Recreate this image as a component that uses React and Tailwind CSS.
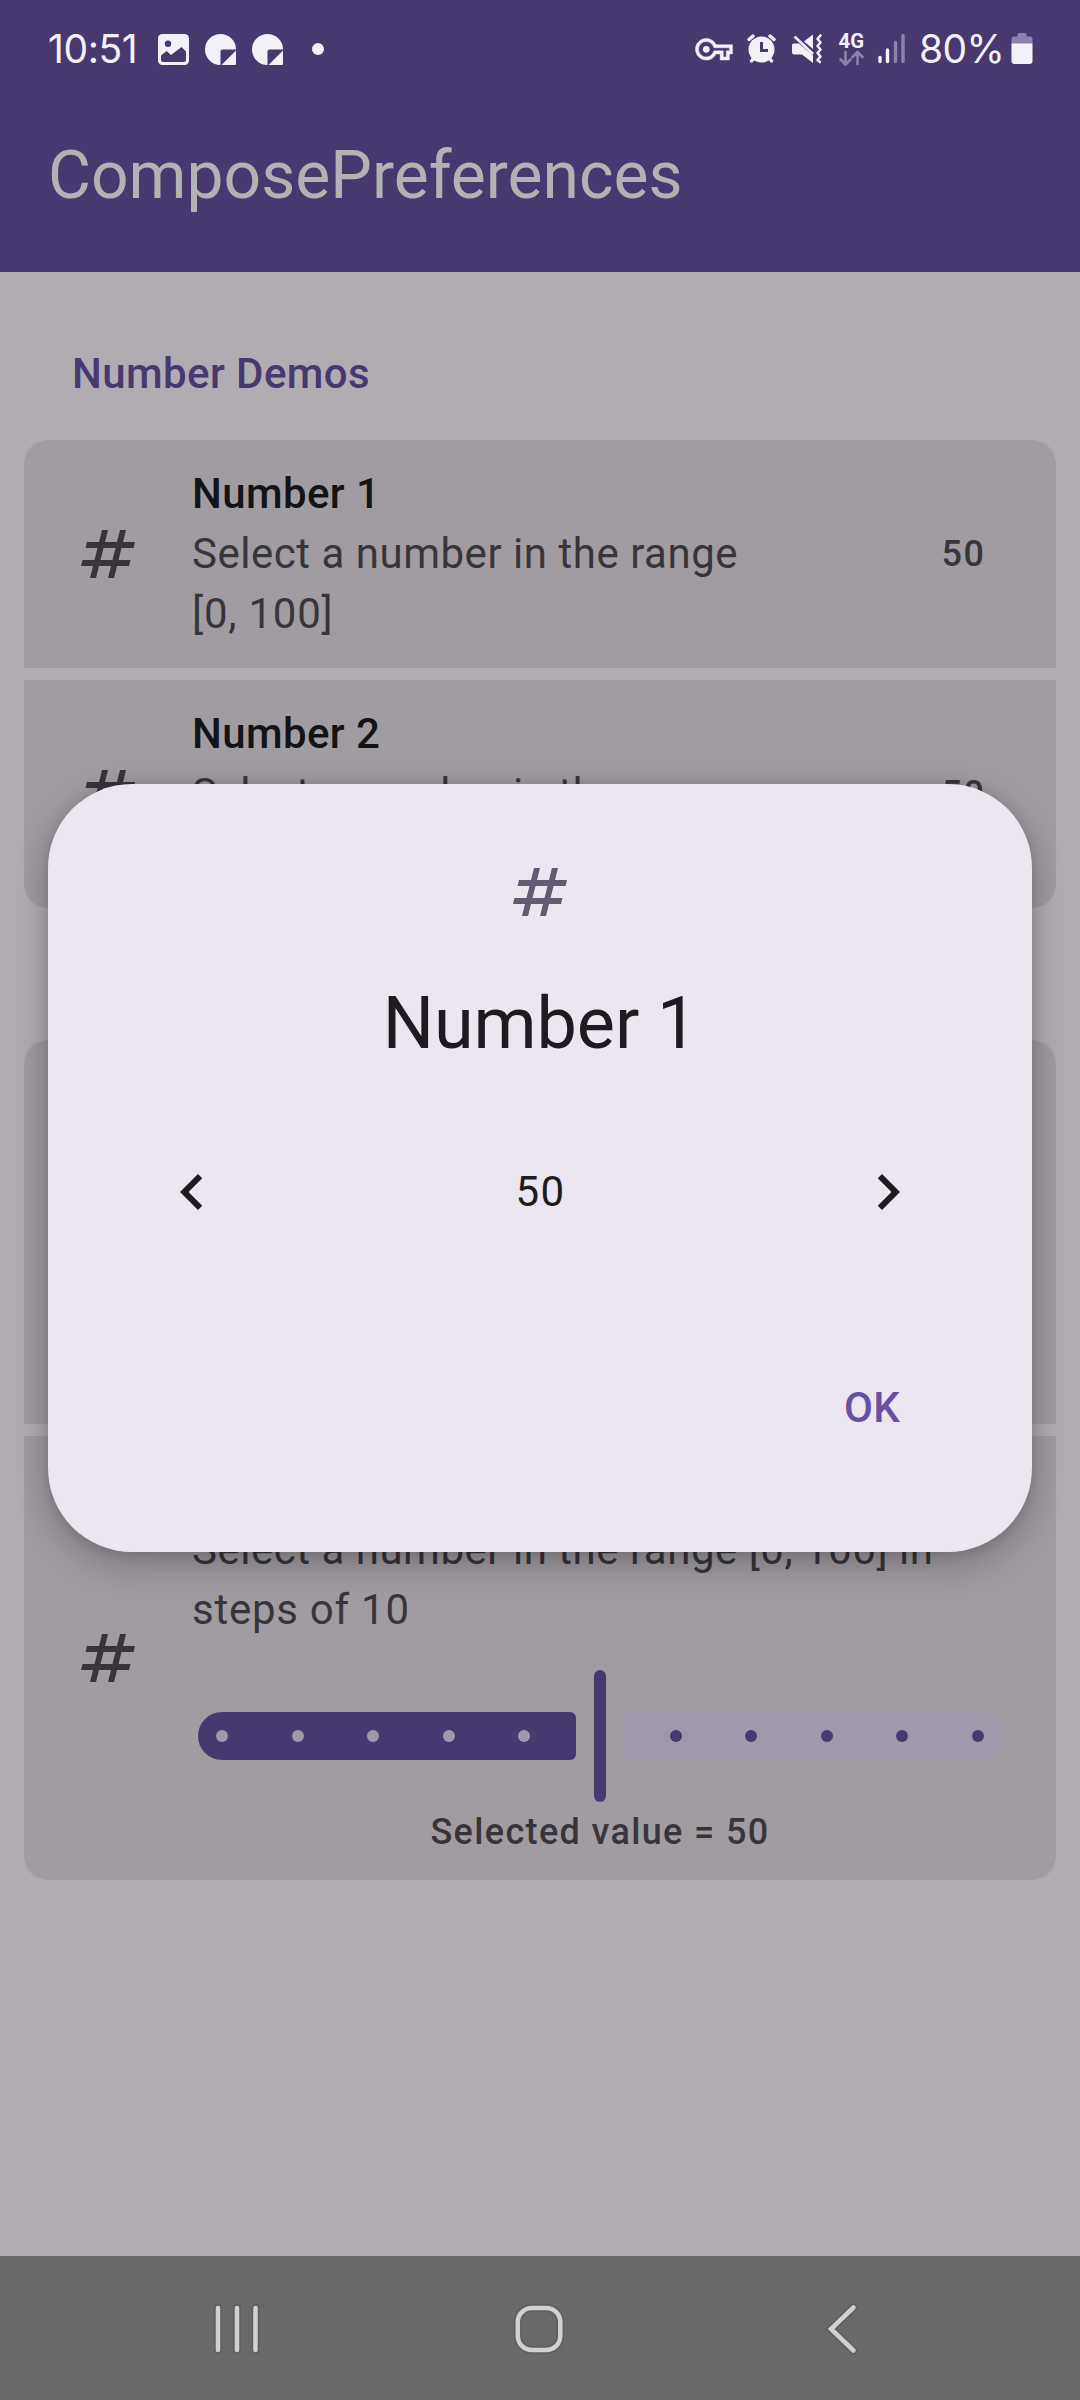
import React from "react";

function NumbersIcon({ className }) {
  return (
    <svg viewBox="0 0 24 24" fill="currentColor" className={"h-[72px] w-[72px] shrink-0 " + className}>
      <path d="M20.5 10L21 8h-4l1-4h-2l-1 4h-4l1-4h-2L9 8H5l-.5 2h4l-1 4h-4L3 16h4l-1 4h2l1-4h4l-1 4h2l1-4h4l.5-2h-4l1-4h4zm-7 4h-4l1-4h4l-1 4z" />
    </svg>
  );
}

function MessageIcon() {
  return (
    <svg viewBox="0 0 31 31" className="h-[31px] w-[31px]" fill="#f3f1f8">
      <path d="M15.5 0A15.5 15.5 0 1 0 15.5 31V17.5Q15.5 15.5 17.5 15.5H31A15.5 15.5 0 0 0 15.5 0Z" />
      <path d="M31 16.5V30a1 1 0 0 1-1 1H16.5z" />
    </svg>
  );
}

function StatusBar() {
  return (
    <div className="flex h-[98px] items-center text-[#f3f1f8]">
      <span className="ml-[48px] w-[110px] whitespace-nowrap font-['Inter'] text-[39px] leading-[48px] font-normal tracking-[-0.4px]">
        10:51
      </span>
      <svg viewBox="0 0 31 31" className="h-[31px] w-[31px]">
        <rect width="31" height="31" rx="4.5" fill="#f3f1f8" />
        <circle cx="10" cy="9.7" r="3.2" fill="#483870" />
        <path d="M3 25V21.5L8.5 17l4.5 4L23.500 13l4.500 4.500V26q0 2-2 2H5q-2 0-2-2z" fill="#483870" />
      </svg>
      <div className="ml-[16px] flex gap-[16px]">
        <MessageIcon />
        <MessageIcon />
      </div>
      <span className="ml-[29px] h-[12px] w-[12px] rounded-full bg-[#f3f1f8]" />
      <svg viewBox="690 24 245 50" className="ml-[366px] h-[50px] w-[245px]" fill="none">
        <g transform="translate(695.500 30.800) scale(1.540)" fill="#f3f1f8">
          <path d="M22 19h-6v-4h-2.680c-1.140 2.420-3.600 4-6.320 4-3.860 0-7-3.140-7-7s3.140-7 7-7c2.720 0 5.170 1.580 6.320 4H24v6h-2v4zm-4-2h2v-4h2v-2H11.940l-.23-.67C11.010 8.340 9.110 7 7 7c-2.760 0-5 2.240-5 5s2.240 5 5 5c2.110 0 4.010-1.340 4.710-3.330l.23-.67H18v4z" stroke="#f3f1f8" strokeWidth=".3" />
          <circle cx="7" cy="12" r="2.200" />
        </g>
        <path d="M749 39.500L753 36M774 39.500L770 36M751.500 61L754.500 57M771.500 61L768.500 57" stroke="#f3f1f8" strokeWidth="3.400" strokeLinecap="round" />
        <circle cx="761.500" cy="49.500" r="13" fill="#f3f1f8" />
        <path d="M761.500 42v8.500h6.500" stroke="#483870" strokeWidth="3" />
        <path d="M792 45q0-1.500 1.500-1.500H799L813 55.500V63L802 54.500H794q-2 0-2-2z" fill="#f3f1f8" />
        <path d="M804 41.500L813 34.500V49z" fill="#f3f1f8" />
        <path d="M794.500 36.500L813 54" stroke="#f3f1f8" strokeWidth="2.600" />
        <path d="M820.500 35.500l-3 3.500 3 3.500-3 3.500 3 3.500-3 3.500 3 3.500-3 3.500 2.500 2" stroke="#f3f1f8" strokeWidth="2.600" strokeLinejoin="round" strokeLinecap="round" />
        <text x="838.500" y="47.500" fill="#f3f1f8" fontFamily="Roboto" fontWeight="700" fontSize="19.500" textLength="25.500" lengthAdjust="spacingAndGlyphs">4G</text>
        <path d="M845.500 52v12M840.500 59.500l5 5 5-5M857.500 64V52.500M852.500 57l5-5 5 5" stroke="#8d80aa" strokeWidth="2.600" strokeLinecap="round" strokeLinejoin="round" />
        <path d="M880 57.500V61.500M887.500 50V61.500" stroke="#f3f1f8" strokeWidth="3.400" strokeLinecap="round" />
        <path d="M895.500 42.500V61.500M903 35.500V61.500" stroke="#8d80aa" strokeWidth="3.400" strokeLinecap="round" />
      </svg>
      <span className="ml-[-16px] w-[92px] whitespace-nowrap font-['Inter'] text-[39px] leading-[48px] font-normal tracking-[-0.6px]">
        80%
      </span>
      <svg viewBox="0 0 22 32" className="h-[32px] w-[22px]">
        <path d="M6.500 3V1.500Q6.500 0 8 0h6q1.500 0 1.500 1.500V3.500H19q2.500 0 2.500 3V11H.5V6.500q0-3 2.500-3h3.500z" fill="#8d80aa" />
        <path d="M.5 10.500h21V28q0 3-3 3H3.500q-3 0-3-3z" fill="#f3f1f8" />
      </svg>
    </div>
  );
}

function NumberRow({ title, value, className }) {
  return (
    <section className={"flex h-[228px] items-center bg-[#a19ca2] px-[48px] " + className}>
      <NumbersIcon className="text-[#38353a]" />
      <div className="ml-[48px] w-[600px]">
        <h2 className="text-[42px] leading-[60px] font-medium tracking-[0.4px] text-[#141316]">{title}</h2>
        <p className="text-[42px] leading-[60px] tracking-[0.75px] text-[#38353a]">
          <span className="tracking-[0.52px]">Select a number in the range</span> [0, 100]
        </p>
      </div>
      <span className="mr-[22.5px] ml-auto text-[36px] leading-[48px] font-medium tracking-[1.5px] text-[#38353a]">
        {value}
      </span>
    </section>
  );
}

function Dots({ className }) {
  return [0, 1, 2, 3, 4].map((i) => <span key={i} className={"h-[12px] w-[12px] rounded-full " + className} />);
}

function Slider() {
  return (
    <div className="mt-[24px] flex h-[144px] items-center gap-[18px] px-[6px]">
      <div className="flex h-[48px] w-[378px] items-center justify-between rounded-l-[24px] rounded-r-[6px] bg-[#483870] pr-[45.6px] pl-[18px]">
        <Dots className="bg-[#a199ab]" />
      </div>
      <div className="h-[132px] w-[12px] rounded-full bg-[#483870]" />
      <div className="flex h-[48px] w-[378px] items-center justify-between rounded-l-[6px] rounded-r-[24px] bg-[#a199ab] pr-[18px] pl-[45.6px]">
        <Dots className="bg-[#483870]" />
      </div>
    </div>
  );
}

function Dialog() {
  return (
    <div
      role="dialog"
      className="absolute top-[784px] left-[48px] flex h-[768px] w-[984px] flex-col items-center rounded-[84px] bg-[#ece6f0] p-[72px] text-[#1d1b20] shadow-[0_12px_36px_rgba(0,0,0,0.28),0_0_12px_rgba(0,0,0,0.1)]"
    >
      <NumbersIcon className="text-[#625b71]" />
      <h1 className="mt-[48px] text-[72px] leading-[96px] tracking-[-0.1px]">Number 1</h1>
      <div className="mt-[48px] flex h-[144px] w-full items-center justify-between px-[36px]">
        <svg viewBox="0 0 24 24" fill="currentColor" className="h-[72px] w-[72px]">
          <path d="M15.410 16.590L10.830 12l4.580-4.590L14 6l-6 6 6 6z" />
        </svg>
        <span className="pl-[1px] text-[42px] leading-[60px] tracking-[1.5px]">50</span>
        <svg viewBox="0 0 24 24" fill="currentColor" className="h-[72px] w-[72px]">
          <path d="M8.590 16.590L13.170 12 8.590 7.410 10 6l6 6-6 6z" />
        </svg>
      </div>
      <button className="mt-auto h-[144px] w-[174px] self-end pr-[2px] text-[42px] leading-[60px] font-medium tracking-[0.3px] text-[#6750a4]">
        OK
      </button>
    </div>
  );
}

function NavBar() {
  return (
    <nav className="mt-auto h-[144px] bg-[#6a686b]">
      <svg viewBox="0 0 1080 144" className="h-[144px] w-full" fill="none" strokeLinecap="round" strokeLinejoin="round">
        {["#605e61", "#d2d1d2"].map((color, i) => (
          <g key={color} stroke={color} strokeWidth={i === 0 ? 8 : 4.5}>
            <path d="M218 52V94M237 52V94M255.500 52V94" />
            <rect x="517.800" y="52" width="42.500" height="42" rx="14" />
            <path d="M853.500 51.500L831 73l22.500 21.500" strokeLinejoin="miter" />
          </g>
        ))}
      </svg>
    </nav>
  );
}

export default function App() {
  return (
    <div className="relative flex h-[2400px] w-[1080px] flex-col overflow-hidden bg-[#b1acb2] font-['Roboto',sans-serif]">
      <header className="h-[272px] bg-[#483870]">
        <StatusBar />
        <div className="mt-[36px] ml-[48px] text-[66px] leading-[84px] text-[#b2b2b2]">ComposePreferences</div>
      </header>
      <h3 className="mt-[72px] ml-[72px] text-[42px] leading-[60px] font-medium tracking-[0.42px] text-[#483870]">
        Number Demos
      </h3>
      <main className="mt-[36px] flex flex-col gap-[12px] px-[24px]">
        <NumberRow title="Number 1" value="50" className="rounded-t-[24px]" />
        <NumberRow title="Number 2" value="50" className="rounded-b-[24px]" />
        <section className="mt-[120px] h-[384px] rounded-t-[24px] bg-[#a19ca2]" />
        <section className="flex h-[444px] items-center rounded-b-[24px] bg-[#a19ca2] px-[48px]">
          <NumbersIcon className="text-[#38353a]" />
          <div className="ml-[48px] w-[816px] pt-[60px]">
            <p className="w-[780px] text-[42px] leading-[60px] tracking-[0.75px] text-[#38353a]">
              <span className="tracking-[0.51px]">Select a number in the range [0, 100] in</span> steps of 10
            </p>
            <Slider />
            <p className="text-center text-[36px] leading-[48px] font-medium tracking-[1.35px] text-[#38353a]">
              Selected value = 50
            </p>
          </div>
        </section>
      </main>
      <NavBar />
      <Dialog />
    </div>
  );
}
